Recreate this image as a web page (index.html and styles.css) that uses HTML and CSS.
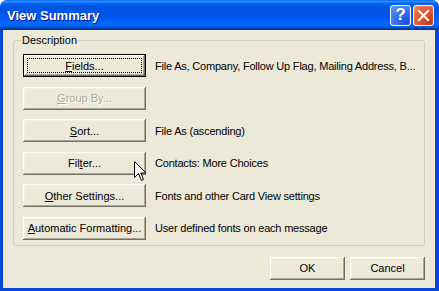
FILE: index.html
```html
<!DOCTYPE html>
<html lang="en">
<head>
    <meta charset="UTF-8">
    <link rel="stylesheet" href="styles.css">
    <title>View Summary</title>
</head>
<body>
    <div class="window">
        <div class="titlebar">
            <span class="title">View Summary</span>
            <div class="title-buttons">
                <div class="tbtn help">?</div>
                <div class="tbtn close">
                    <svg width="13" height="13" viewBox="0 0 13 13">
                        <path d="M2 2 L11 11 M11 2 L2 11" stroke="#fff" stroke-width="2.2" stroke-linecap="square"/>
                    </svg>
                </div>
            </div>
        </div>

        <div class="client">
            <fieldset class="group">
                <legend>Description</legend>
                <div class="rows">
                    <button class="btn default"><u>F</u>ields...</button>
                    <span class="desc">File As, Company, Follow Up Flag, Mailing Address, B...</span>

                    <button class="btn disabled"><u>G</u>roup By...</button>
                    <span class="desc"></span>

                    <button class="btn"><u>S</u>ort...</button>
                    <span class="desc">File As (ascending)</span>

                    <button class="btn">Fil<u>t</u>er...</button>
                    <span class="desc">Contacts: More Choices</span>

                    <button class="btn"><u>O</u>ther Settings...</button>
                    <span class="desc">Fonts and other Card View settings</span>

                    <button class="btn"><u>A</u>utomatic Formatting...</button>
                    <span class="desc">User defined fonts on each message</span>
                </div>
            </fieldset>

            <div class="actions">
                <button class="btn small">OK</button>
                <button class="btn small">Cancel</button>
            </div>
        </div>

        <!-- mouse pointer resting over the Filter button -->
        <svg class="cursor" width="13" height="21" viewBox="0 0 13 21">
            <path d="M0.5 0.5 L0.5 16.5 L4.5 12.5 L7.5 19.5 L9.5 18.5 L6.8 12 L12 12 Z" fill="#fff" stroke="#000" stroke-width="1"/>
        </svg>
    </div>
</body>
</html>
```

FILE: styles.css
```css
body {
    margin: 0;
    background: #ffffff;
    font-family: "Liberation Sans", Arial, sans-serif;
    font-size: 11px;
}

.window {
    position: relative;
    width: 439px;
    height: 291px;
    box-sizing: border-box;
    padding: 0 4px 3px 3px;
    background: #0846d8;
    border-radius: 7px 7px 0 0;
    display: flex;
    flex-direction: column;
    overflow: hidden;
}

.titlebar {
    height: 30px;
    margin: 0 -4px 0 -3px;
    padding: 0 5px 0 7px;
    display: flex;
    align-items: center;
    justify-content: space-between;
    border-radius: 7px 7px 0 0;
    background: linear-gradient(to bottom, #0058ee 0%, #3593ff 4%, #288eff 6%, #127dff 8%, #036ffc 10%, #0262ee 14%, #0057e5 20%, #0054e3 24%, #0055eb 56%, #005bf5 66%, #026afe 76%, #0062ef 86%, #0052d6 92%, #0040ab 94%, #003092 100%);
}

.title {
    color: #fff;
    font-weight: bold;
    font-size: 13px;
    text-shadow: 1px 1px #0f1089;
    margin-top: 1px;
}

.title-buttons {
    display: flex;
    gap: 2px;
}

.tbtn {
    width: 19px;
    height: 19px;
    border: 1px solid #fff;
    border-radius: 3px;
    display: flex;
    align-items: center;
    justify-content: center;
    color: #fff;
    font-weight: bold;
    font-size: 17px;
}

.help {
    background: radial-gradient(circle at 80% 85%, #1b4ed9 0%, #3a78f0 55%, #5c95f5 100%);
}

.close {
    background: radial-gradient(circle at 85% 85%, #c23a14 0%, #e05a2f 55%, #f08a64 100%);
}

.client {
    flex: 1;
    background: #ece9d8;
    padding: 4px 10px 0 10px;
    display: flex;
    flex-direction: column;
}

.group {
    margin: 0;
    padding: 0 9px 5px;
    border: 1px solid #d0d0bf;
    border-radius: 3px;
}

.group legend {
    padding: 0 1px;
    margin-left: -2px;
    color: #000;
    line-height: 13px;
}

.rows {
    margin-top: 7px;
    display: grid;
    grid-template-columns: 123px 1fr;
    grid-auto-rows: 23px;
    row-gap: 9.5px;
    column-gap: 9px;
    align-items: center;
}

.desc {
    color: #000;
    white-space: nowrap;
    letter-spacing: -0.2px;
}

.btn {
    height: 23px;
    padding: 0;
    border: none;
    background: #ece9d8;
    font-family: inherit;
    font-size: 11px;
    color: #000;
    box-shadow: inset -1px -1px #716f64, inset 1px 1px #ffffff, inset -2px -2px #aca899, inset 2px 2px #f1efe2;
}

.btn.default {
    border: 1px solid #000;
    outline: 1px dotted #000;
    outline-offset: -5px;
}

.btn.disabled {
    color: #aca899;
    text-shadow: 1px 1px #fff;
}

.actions {
    margin-top: 11px;
    display: flex;
    justify-content: flex-end;
    gap: 5px;
}

.btn.small {
    width: 75px;
}

.cursor {
    position: absolute;
    left: 134px;
    top: 161px;
}
```
